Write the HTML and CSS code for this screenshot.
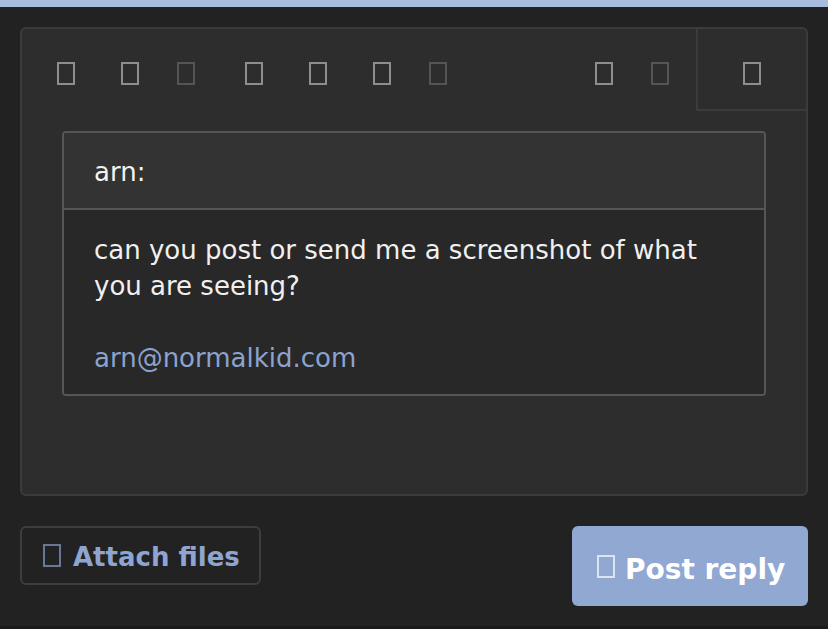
FILE: index.html
```html
<!DOCTYPE html>
<html lang="en">
<head>
<meta charset="utf-8">
<title>Post reply</title>
<link rel="stylesheet" href="styles.css">
</head>
<body>
<div class="topbar"></div>
<main class="main">
  <section class="editor">
    <div class="toolbar">
      <div class="tb-group">
        <button class="tb-btn" type="button"><span class="ico"></span></button>
        <button class="tb-btn" type="button"><span class="ico"></span></button>
        <button class="tb-btn narrow" type="button"><span class="ico dim"></span></button>
      </div>
      <div class="tb-group">
        <button class="tb-btn" type="button"><span class="ico"></span></button>
        <button class="tb-btn" type="button"><span class="ico"></span></button>
        <button class="tb-btn" type="button"><span class="ico"></span></button>
        <button class="tb-btn narrow" type="button"><span class="ico dim"></span></button>
      </div>
      <div class="tb-group tb-right">
        <button class="tb-btn" type="button"><span class="ico"></span></button>
        <button class="tb-btn narrow" type="button"><span class="ico dim"></span></button>
      </div>
      <div class="tb-panel">
        <button class="tb-btn panel-btn" type="button"><span class="ico"></span></button>
      </div>
    </div>
    <div class="content">
      <blockquote class="quote">
        <div class="quote-head">arn:</div>
        <div class="quote-body">
          can you post or send me a screenshot of what<br>you are seeing?<br><br><a class="mail" href="#">arn@normalkid.com</a>
        </div>
      </blockquote>
    </div>
  </section>
  <div class="actions">
    <button class="btn-attach" type="button"><span class="ico ico-attach"></span><span class="lbl">Attach files</span></button>
    <button class="btn-post" type="button"><span class="ico ico-post"></span><span class="lbl">Post reply</span></button>
  </div>
</main>
<div class="footstrip"></div>
</body>
</html>
```
FILE: styles.css
```css
* { box-sizing: border-box; }

html, body {
  margin: 0;
  padding: 0;
  background: #222222;
  font-family: "DejaVu Sans", Verdana, sans-serif;
  color: #f0f0f0;
}

.topbar {
  height: 7px;
  background: #a7bcdf;
}

.main {
  padding: 20px 20px 20px;
}

.editor {
  height: 469px;
  border: 2px solid #3b3b3b;
  border-radius: 6px;
  background: #2d2d2d;
  display: flex;
  flex-direction: column;
}

.toolbar {
  display: flex;
  align-items: flex-start;
  height: 82px;
  padding-left: 12px;
  gap: 12px;
}

.tb-group {
  display: flex;
}

.tb-right {
  margin-left: auto;
}

.tb-btn {
  width: 64px;
  height: 80px;
  padding: 33px 0 0;
  margin: 0;
  border: 0;
  background: transparent;
  display: flex;
  justify-content: center;
  align-items: flex-start;
  cursor: pointer;
}

.tb-btn.narrow {
  width: 48px;
}

.tb-panel {
  width: 110px;
  height: 82px;
  border-left: 2px solid #3b3b3b;
  border-bottom: 2px solid #3b3b3b;
  display: flex;
  justify-content: center;
}

.panel-btn {
  width: 108px;
}

.ico {
  display: block;
  flex: none;
  width: 18px;
  height: 23px;
  border: 2px solid #8e8e8e;
}

.ico.dim {
  border-color: #555555;
}

.content {
  padding: 20px 40px;
}

.quote {
  margin: 0;
  border: 2px solid #565656;
  border-radius: 4px;
  overflow: hidden;
  font-size: 26px;
  line-height: 36px;
}

.quote-head {
  background: #333333;
  border-bottom: 2px solid #565656;
  padding: 21px 30px 18px;
  color: #f2f2f2;
}

.quote-body {
  background: #282828;
  padding: 22px 30px 18px;
  color: #f0f0f0;
}

.mail {
  color: #8ba3cf;
  text-decoration: none;
}

.actions {
  margin-top: 30px;
  display: flex;
  justify-content: space-between;
  align-items: flex-start;
}

.btn-attach {
  height: 59px;
  margin: 0;
  padding: 0 19px 0 21px;
  border: 2px solid #3d3d3d;
  border-radius: 6px;
  background: #222222;
  color: #8ea5d1;
  font-family: "DejaVu Sans", Verdana, sans-serif;
  font-weight: bold;
  font-size: 26px;
  display: flex;
  align-items: center;
  gap: 12px;
  cursor: pointer;
}

.btn-attach .lbl {
  margin-top: 3px;
}

.ico-attach {
  border-color: #6a7897;
}

.btn-post {
  width: 236px;
  height: 80px;
  margin: 0;
  padding: 0 20px 0 25px;
  border: 0;
  border-radius: 6px;
  background: #91a8d3;
  color: #ffffff;
  font-family: "DejaVu Sans", Verdana, sans-serif;
  font-weight: bold;
  font-size: 28px;
  display: flex;
  align-items: center;
  gap: 10px;
  cursor: pointer;
  white-space: nowrap;
}

.btn-post .lbl {
  margin-top: 6px;
}

.ico-post {
  border-color: #dce4f3;
}

.footstrip {
  height: 3px;
  background: #1a1a1a;
}
```
